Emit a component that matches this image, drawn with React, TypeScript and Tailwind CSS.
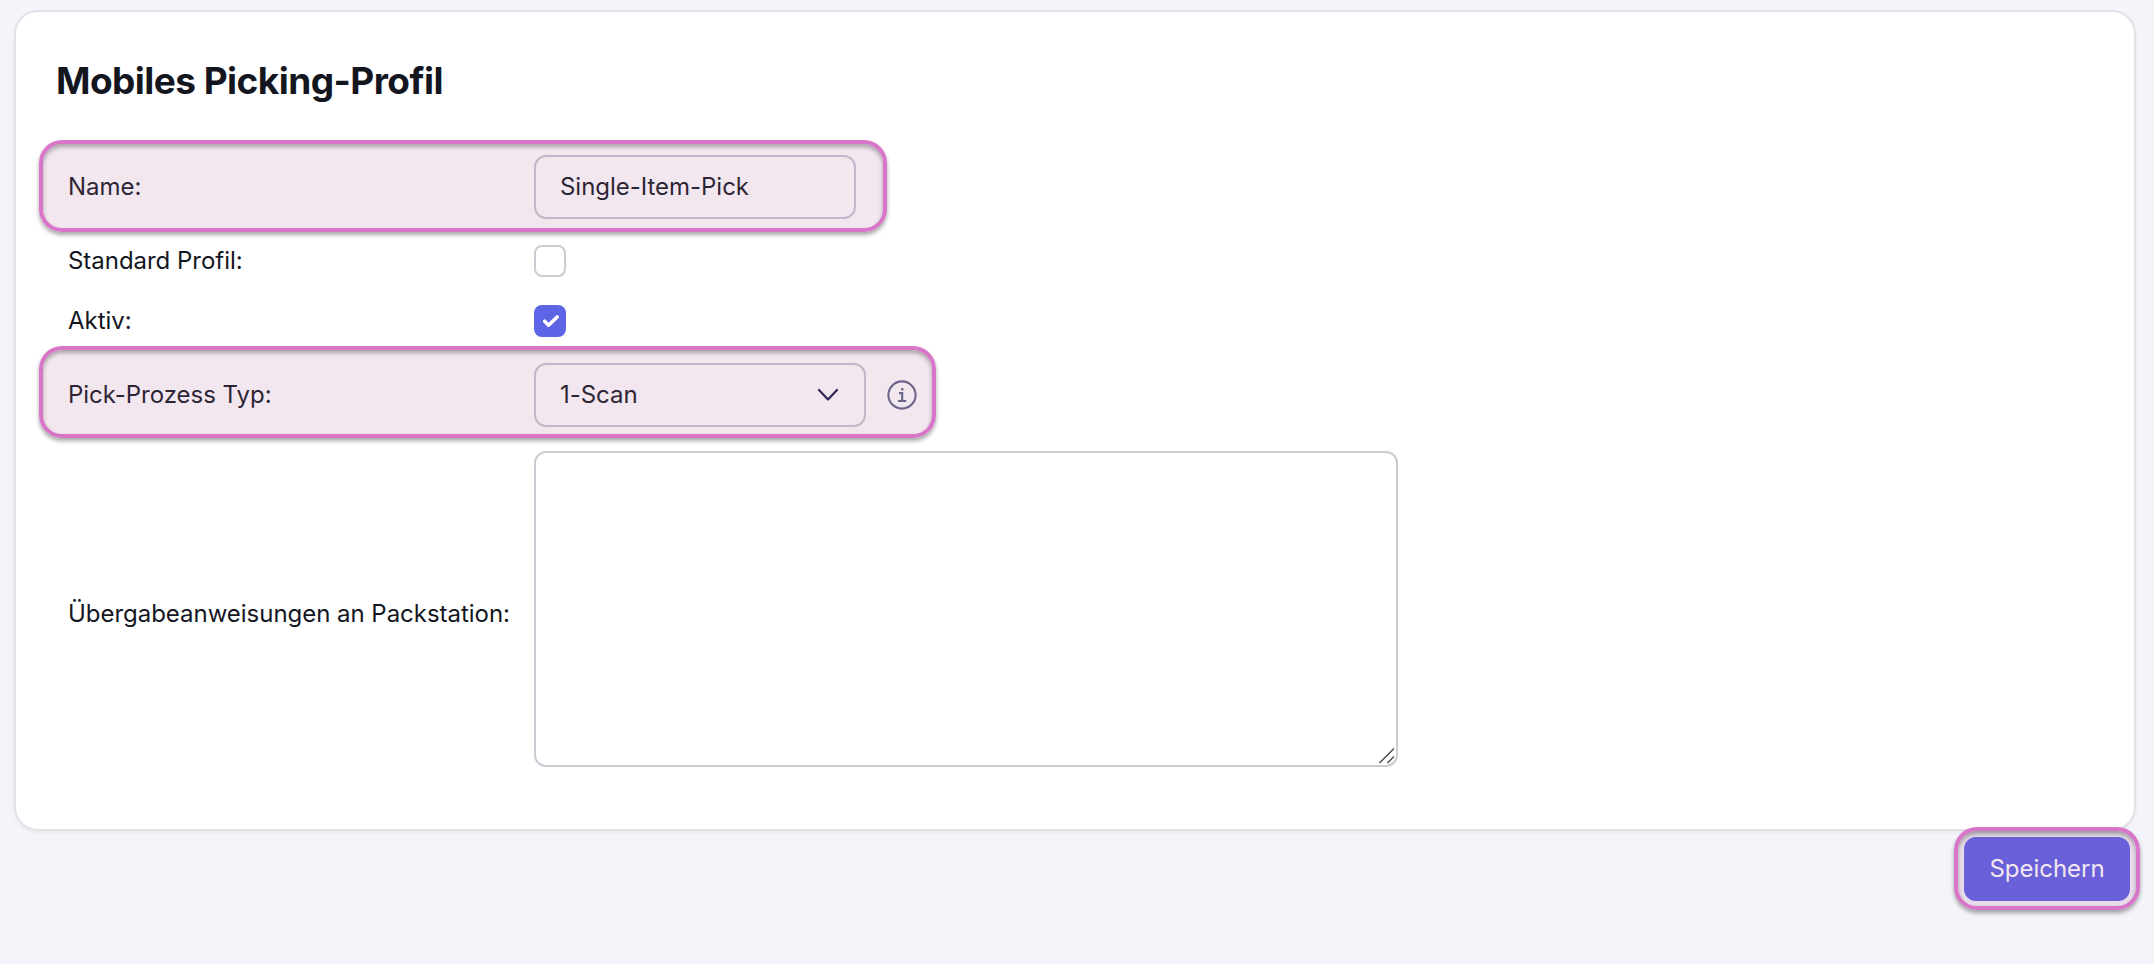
import { useState } from "react";

const HIGHLIGHT =
  "pointer-events-none absolute rounded-[23px] border-4 border-[#d975c8] bg-[rgb(176,108,156)]/16 shadow-[0_3px_4px_rgba(0,0,0,0.35),inset_0_3px_4px_rgba(0,0,0,0.3)]";

function Checkbox({ checked, onChange }: { checked: boolean; onChange: () => void }) {
  return (
    <button
      type="button"
      role="checkbox"
      aria-checked={checked}
      onClick={onChange}
      className={`flex h-8 w-8 items-center justify-center rounded-lg ${
        checked ? "bg-[#5e64e6]" : "border-2 border-[#c9ccd3] bg-white"
      }`}
    >
      {checked && (
        <svg width="32" height="32" viewBox="0 0 32 32" fill="none">
          <path d="M10.6 16.2l4 4 8.6-8.2" stroke="#fff" strokeWidth="3.6" strokeLinecap="round" strokeLinejoin="round" />
        </svg>
      )}
    </button>
  );
}

export default function App() {
  const [standard, setStandard] = useState(false);
  const [active, setActive] = useState(true);

  return (
    <div className="h-[964px] w-[2154px] bg-[#f3f5fb] pt-[10px] pl-[14px] font-['Inter',sans-serif] text-[24px] leading-[32px] tracking-[-0.03px] text-[#14161f]">
      <div className="h-[821px] w-[2122px] rounded-[24px] border-2 border-[#e1e2e6] bg-white shadow-[0_2px_4px_rgba(0,0,0,0.05)]">
        <h1 className="mt-[45px] ml-[40px] text-[37px] leading-[48px] font-bold tracking-[-0.55px]">
          Mobiles Picking-Profil
        </h1>

        <div className="mt-[37px] ml-[23px] flex w-fit flex-col">
          <div className="relative flex h-[90px] items-center pl-[29px]">
            <label className="w-[466px]">Name:</label>
            <div className="flex h-16 w-[322px] items-center rounded-xl border-2 border-[#c5c7d4] px-[24px]">
              Single-Item-Pick
            </div>
            <div className={`${HIGHLIGHT} top-[-2px] left-0 h-[92px] w-[848px]`} />
          </div>

          <div className="mt-[13px] flex h-8 items-center pl-[29px]">
            <label className="w-[466px]">Standard Profil:</label>
            <Checkbox checked={standard} onChange={() => setStandard(!standard)} />
          </div>

          <div className="mt-7 flex h-8 items-center pl-[29px]">
            <label className="w-[466px]">Aktiv:</label>
            <Checkbox checked={active} onChange={() => setActive(!active)} />
          </div>

          <div className="relative mt-[9px] flex h-[98px] items-center pl-[29px]">
            <label className="w-[466px]">Pick-Prozess Typ:</label>
            <div className="flex h-16 w-[332px] items-center justify-between rounded-xl border-2 border-[#c5c7d4] px-[24px]">
              1-Scan
              <svg width="24" height="24" viewBox="0 0 24 24" fill="none">
                <path d="M3 7l9 9.5L21 7" stroke="#17194a" strokeWidth="2.2" strokeLinecap="round" strokeLinejoin="round" />
              </svg>
            </div>
            <svg className="ml-[20px]" width="32" height="32" viewBox="0 0 32 32" fill="none" stroke="#5f6386" strokeWidth="2.1">
              <circle cx="16" cy="16" r="13.6" />
              <path d="M13 14.1h3.2v8M12 22h8.2" />
              <path d="M16.2 9.1v2.3" strokeWidth="2.4" />
            </svg>
            <div className={`${HIGHLIGHT} top-0 left-0 h-[92px] w-[897px]`} />
          </div>

          <div className="mt-[7px] flex items-center pl-[29px]">
            <label className="w-[466px] pt-[9px]">Übergabeanweisungen an Packstation:</label>
            <div className="flex h-[316px] w-[864px] items-end justify-end rounded-xl border-2 border-[#c9ccd3]">
              <svg width="20" height="20" viewBox="0 0 20 20" fill="none" stroke="#555" strokeWidth="1.6">
                <path d="M3.5 18L18 3.5M11.5 18L18 11.5" />
              </svg>
            </div>
          </div>
        </div>
      </div>

      <div className="mt-[6px] flex w-[2116px] justify-end">
        <div className="relative">
          <button className="flex h-16 w-[166px] items-center justify-center rounded-xl bg-[#5d60e6] text-white">
            Speichern
          </button>
          <div className={`${HIGHLIGHT} top-[-10px] left-[-10px] h-[83px] w-[186px]`} />
        </div>
      </div>
    </div>
  );
}
